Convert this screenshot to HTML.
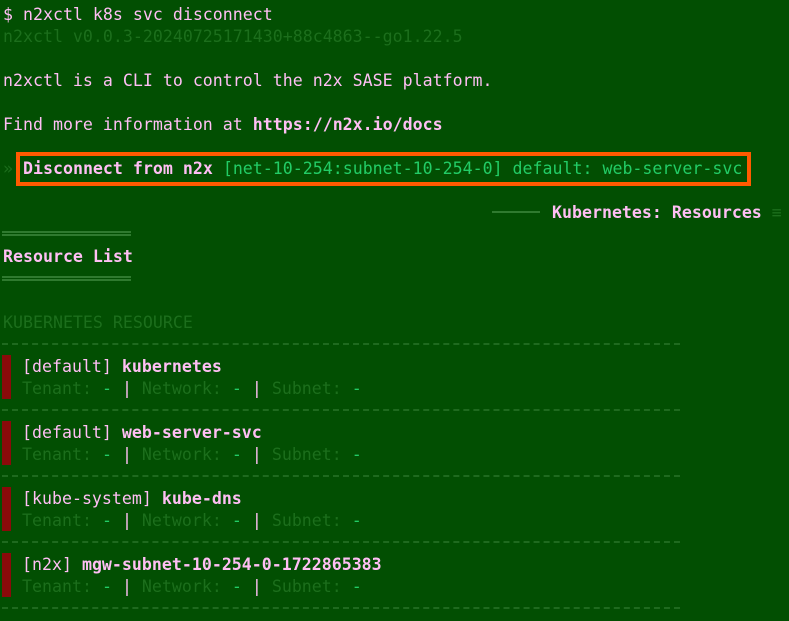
<!DOCTYPE html>
<html><head><style>
html,body{margin:0;padding:0;}
body{width:789px;height:621px;background:#024f02;overflow:hidden;position:relative;font-family:"DejaVu Sans Mono","Liberation Mono",monospace;font-size:16.6px;color:#ffbff4;}
.l{position:absolute;left:3px;white-space:pre;line-height:22px;height:22px;margin-top:1px;}
.dim{color:#1c6e1c;}
.g{color:#22cc66;}
b{font-weight:bold;}
.box{position:absolute;left:16px;top:152px;width:727px;height:26px;border:4px solid #ff5a00;}
.dl{position:absolute;left:2px;width:129px;height:5px;border-top:2px solid #2f7a2f;border-bottom:2px solid #2f7a2f;box-sizing:border-box;}
.bar{position:absolute;left:2px;width:9px;height:44px;background:#8a0a0a;}
.dash{position:absolute;left:2px;width:678px;border-top:2px dashed #1f6a1f;}
</style></head><body>
<div class="l" style="top:3px">$ n2xctl k8s svc disconnect</div>
<div class="l dim" style="top:25px">n2xctl v0.0.3-20240725171430+88c4863--go1.22.5</div>
<div class="l" style="top:69px">n2xctl is a CLI to control the n2x SASE platform.</div>
<div class="l" style="top:113px">Find more information at <b>https://n2x.io/docs</b></div>
<div class="box"></div>
<div class="l" style="top:157px"><span class="dim">»</span> <b>Disconnect from n2x</b> <span class="g">[net-10-254:subnet-10-254-0] default: web-server-svc</span></div>
<div style="position:absolute;left:492px;top:211px;width:48px;height:2px;background:#2f7a2f"></div>
<div class="l" style="top:201px;left:552px"><b>Kubernetes: Resources</b> <span class="dim">≡</span></div>
<div class="dl" style="top:231px"></div>
<div class="l" style="top:245px"><b>Resource List</b></div>
<div class="dl" style="top:276px"></div>
<div class="l dim" style="top:311px">KUBERNETES RESOURCE</div>
<div class="dash" style="top:343px"></div>
<div class="bar" style="top:355px"></div>
<div class="l" style="top:355px;left:22px">[default] <b>kubernetes</b></div>
<div class="l dim" style="top:377px;left:22px">Tenant: <span class="g">-</span> <span style="color:#ffbff4">|</span> Network: <span class="g">-</span> <span style="color:#ffbff4">|</span> Subnet: <span class="g">-</span></div>
<div class="dash" style="top:409px"></div>
<div class="bar" style="top:421px"></div>
<div class="l" style="top:421px;left:22px">[default] <b>web-server-svc</b></div>
<div class="l dim" style="top:443px;left:22px">Tenant: <span class="g">-</span> <span style="color:#ffbff4">|</span> Network: <span class="g">-</span> <span style="color:#ffbff4">|</span> Subnet: <span class="g">-</span></div>
<div class="dash" style="top:475px"></div>
<div class="bar" style="top:487px"></div>
<div class="l" style="top:487px;left:22px">[kube-system] <b>kube-dns</b></div>
<div class="l dim" style="top:509px;left:22px">Tenant: <span class="g">-</span> <span style="color:#ffbff4">|</span> Network: <span class="g">-</span> <span style="color:#ffbff4">|</span> Subnet: <span class="g">-</span></div>
<div class="dash" style="top:541px"></div>
<div class="bar" style="top:553px"></div>
<div class="l" style="top:553px;left:22px">[n2x] <b>mgw-subnet-10-254-0-1722865383</b></div>
<div class="l dim" style="top:575px;left:22px">Tenant: <span class="g">-</span> <span style="color:#ffbff4">|</span> Network: <span class="g">-</span> <span style="color:#ffbff4">|</span> Subnet: <span class="g">-</span></div>
<div class="dash" style="top:607px"></div>
</body></html>
